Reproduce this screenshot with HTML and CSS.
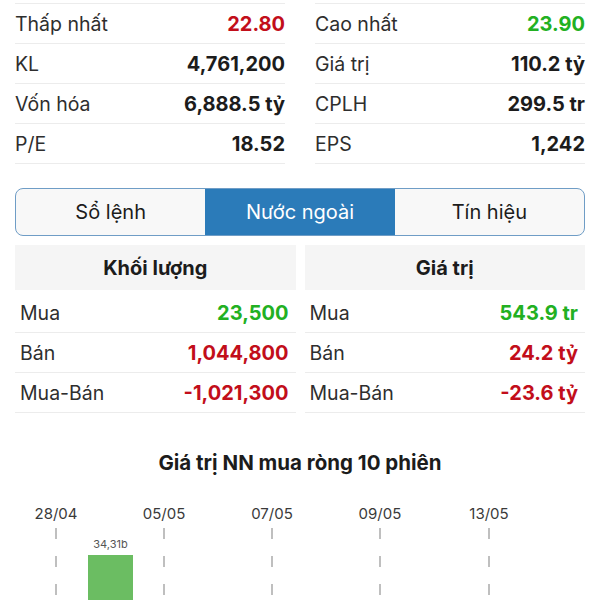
FILE: index.html
```html
<!DOCTYPE html>
<html lang="vi">
<head>
  <meta charset="UTF-8">
  <meta name="viewport" content="width=device-width, initial-scale=1.0">
  <title>Chi tiết cổ phiếu</title>
  <link rel="stylesheet" href="styles.css">
</head>
<body>
  <div class="page">
    <div class="stats">
      <div class="stats-col">
        <div class="row"><span class="label">Thấp nhất</span><span class="value down">22.80</span></div>
        <div class="row"><span class="label">KL</span><span class="value">4,761,200</span></div>
        <div class="row"><span class="label">Vốn hóa</span><span class="value">6,888.5 tỷ</span></div>
        <div class="row"><span class="label">P/E</span><span class="value">18.52</span></div>
      </div>
      <div class="stats-col">
        <div class="row"><span class="label">Cao nhất</span><span class="value up">23.90</span></div>
        <div class="row"><span class="label">Giá trị</span><span class="value">110.2 tỷ</span></div>
        <div class="row"><span class="label">CPLH</span><span class="value">299.5 tr</span></div>
        <div class="row"><span class="label">EPS</span><span class="value">1,242</span></div>
      </div>
    </div>

    <div class="tabs">
      <button class="tab">Sổ lệnh</button>
      <button class="tab active">Nước ngoài</button>
      <button class="tab">Tín hiệu</button>
    </div>

    <div class="foreign">
      <div class="ftable">
        <div class="fhead">Khối lượng</div>
        <div class="frow"><span class="label">Mua</span><span class="value up">23,500</span></div>
        <div class="frow"><span class="label">Bán</span><span class="value down">1,044,800</span></div>
        <div class="frow"><span class="label">Mua-Bán</span><span class="value down">-1,021,300</span></div>
      </div>
      <div class="ftable">
        <div class="fhead">Giá trị</div>
        <div class="frow"><span class="label">Mua</span><span class="value up">543.9 tr</span></div>
        <div class="frow"><span class="label">Bán</span><span class="value down">24.2 tỷ</span></div>
        <div class="frow"><span class="label">Mua-Bán</span><span class="value down">-23.6 tỷ</span></div>
      </div>
    </div>

    <h3 class="chart-title">Giá trị NN mua ròng 10 phiên</h3>
  </div>

  <svg class="chart" width="600" height="112" viewBox="0 0 600 112">
    <g class="dates">
      <text x="56" y="28">28/04</text>
      <text x="164" y="28">05/05</text>
      <text x="272" y="28">07/05</text>
      <text x="380" y="28">09/05</text>
      <text x="489" y="28">13/05</text>
    </g>
    <g class="grid">
      <line x1="56" y1="37" x2="56" y2="112"/>
      <line x1="164" y1="37" x2="164" y2="112"/>
      <line x1="272" y1="37" x2="272" y2="112"/>
      <line x1="380" y1="37" x2="380" y2="112"/>
      <line x1="489" y1="37" x2="489" y2="112"/>
    </g>
    <rect class="bar" x="88" y="64" width="45" height="48"/>
    <text class="bar-label" x="110.5" y="57">34,31b</text>
  </svg>
</body>
</html>
```

FILE: styles.css
```css
:root {
  --text: #1c1c1c;
  --label: #2e2e2e;
  --line: #ececec;
  --red: #c20e1a;
  --green: #22b022;
  --blue: #2b7bb9;
  --tab-border: #6f9dc6;
  --head-bg: #f5f5f5;
}
body {
  margin: 0;
  background: #fff;
  font-family: Inter, "Noto Sans", sans-serif;
  color: var(--text);
}
.page {
  padding: 0 15px;
}
.stats {
  display: flex;
  gap: 30px;
  padding-top: 3px;
}
.stats-col {
  flex: 1;
  border-top: 1px solid var(--line);
}
.row, .frow {
  display: flex;
  justify-content: space-between;
  align-items: center;
  height: 39px;
  border-bottom: 1px solid var(--line);
  font-size: 19.5px;
}
.label {
  color: var(--label);
}
.value {
  font-weight: 700;
  font-size: 20px;
}
.up {
  color: var(--green);
}
.down {
  color: var(--red);
}
.tabs {
  display: flex;
  margin-top: 24px;
  height: 46px;
  border: 1.5px solid var(--tab-border);
  border-radius: 8px;
  overflow: hidden;
  background: #f8f8f8;
}
.tab {
  flex: 1;
  border: none;
  background: transparent;
  font-family: inherit;
  font-size: 20px;
  color: var(--text);
  padding: 0;
}
.tab.active {
  background: var(--blue);
  color: #fff;
}
.foreign {
  display: flex;
  gap: 9px;
  margin-top: 9px;
}
.ftable {
  flex: 1;
}
.fhead {
  height: 45px;
  display: flex;
  align-items: center;
  justify-content: center;
  background: var(--head-bg);
  font-size: 20px;
  font-weight: 700;
  margin-bottom: 3px;
}
.frow {
  padding: 0 7px 0 5px;
}
.chart-title {
  margin: 38px 0 0;
  text-align: center;
  font-size: 20.5px;
  font-weight: 700;
  line-height: 24px;
}
.chart {
  display: block;
  margin-top: 16px;
}
.dates text {
  font-family: Inter, "Noto Sans", sans-serif;
  font-size: 15px;
  fill: #3a3a3a;
  text-anchor: middle;
}
.grid line {
  stroke: #aaaaaa;
  stroke-width: 1.5;
  stroke-dasharray: 11 17;
}
.bar {
  fill: #6bbd62;
}
.bar-label {
  font-family: Inter, "Noto Sans", sans-serif;
  font-size: 11px;
  fill: #555;
  text-anchor: middle;
}
```
